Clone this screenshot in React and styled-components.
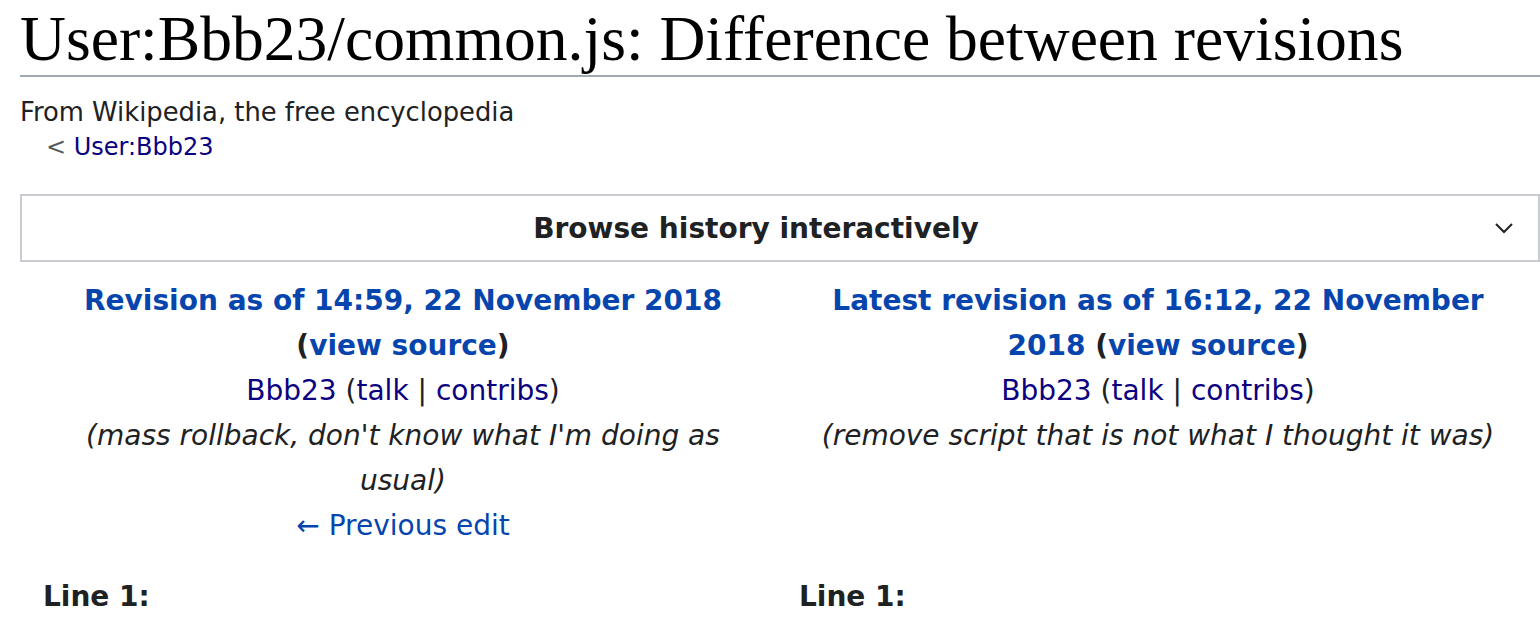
import styled, { createGlobalStyle } from "styled-components";

const GlobalStyle = createGlobalStyle`
  html, body {
    margin: 0;
    padding: 0;
    background: #ffffff;
  }
  body {
    font-family: "DejaVu Sans", sans-serif;
    color: #202122;
  }
`;

const Page = styled.div`
  padding-left: 20px;
  overflow: hidden;
`;

const Heading = styled.h1`
  margin: 0;
  height: 75px;
  font-family: "Liberation Serif", serif;
  font-weight: normal;
  font-size: 63.6px;
  line-height: 78px;
  color: #000;
  white-space: nowrap;
  border-bottom: 2px solid #a2a9b1;
`;

const Tagline = styled.div`
  margin-top: 18px;
  font-size: 25.8px;
  line-height: 35px;
`;

const SubPage = styled.div`
  padding-left: 26px;
  font-size: 24px;
  line-height: 35px;
  color: #54595d;
`;

const Link = styled.a`
  color: ${(p) => (p.$visited ? "#0b0080" : "#0645ad")};
  text-decoration: none;
`;

const HistoryBox = styled.div`
  margin-top: 29px;
  height: 64px;
  padding-right: 48px;
  border: 2px solid #c8ccd1;
  display: flex;
  align-items: center;
  justify-content: center;
  position: relative;
  font-weight: bold;
  font-size: 28px;
`;

const Chevron = styled.svg`
  position: absolute;
  right: 24px;
  top: 50%;
  transform: translateY(-50%);
`;

const DiffHeader = styled.div`
  margin-top: 16px;
  display: grid;
  grid-template-columns: 1fr 1fr;
`;

const Side = styled.div`
  padding: ${(p) => (p.$right ? "0 31px 0 27px" : "0 26px 0 32px")};
  text-align: center;
  font-size: 28px;
  line-height: 45px;
`;

const RevTitle = styled.div`
  font-weight: bold;
`;

const Summary = styled.div`
  font-style: italic;
`;

const LineRow = styled.div`
  margin-top: 26px;
  display: grid;
  grid-template-columns: 1fr 1fr;
`;

const LineNo = styled.div`
  padding-left: ${(p) => (p.$right ? "19px" : "23px")};
  font-weight: bold;
  font-size: 28px;
  line-height: 45px;
`;

function UserLinks() {
  return (
    <div>
      <Link $visited href="#">Bbb23</Link> (<Link $visited href="#">talk</Link> |{" "}
      <Link $visited href="#">contribs</Link>)
    </div>
  );
}

export default function App() {
  return (
    <Page>
      <GlobalStyle />
      <Heading>User:Bbb23/common.js: Difference between revisions</Heading>
      <Tagline>From Wikipedia, the free encyclopedia</Tagline>
      <SubPage>
        &lt; <Link $visited href="#">User:Bbb23</Link>
      </SubPage>
      <HistoryBox>
        Browse history interactively
        <Chevron width="20" height="20" viewBox="0 0 20 20">
          <path d="M2 6 L10 14 L18 6" fill="none" stroke="#202122" strokeWidth="2" />
        </Chevron>
      </HistoryBox>
      <DiffHeader>
        <Side>
          <RevTitle>
            <Link href="#">Revision as of 14:59, 22 November 2018</Link> (
            <Link href="#">view source</Link>)
          </RevTitle>
          <UserLinks />
          <Summary>(mass rollback, don't know what I'm doing as usual)</Summary>
          <div>
            <Link href="#">← Previous edit</Link>
          </div>
        </Side>
        <Side $right>
          <RevTitle>
            <Link href="#">Latest revision as of 16:12, 22 November 2018</Link> (
            <Link href="#">view source</Link>)
          </RevTitle>
          <UserLinks />
          <Summary>(remove script that is not what I thought it was)</Summary>
        </Side>
      </DiffHeader>
      <LineRow>
        <LineNo>Line 1:</LineNo>
        <LineNo $right>Line 1:</LineNo>
      </LineRow>
    </Page>
  );
}
